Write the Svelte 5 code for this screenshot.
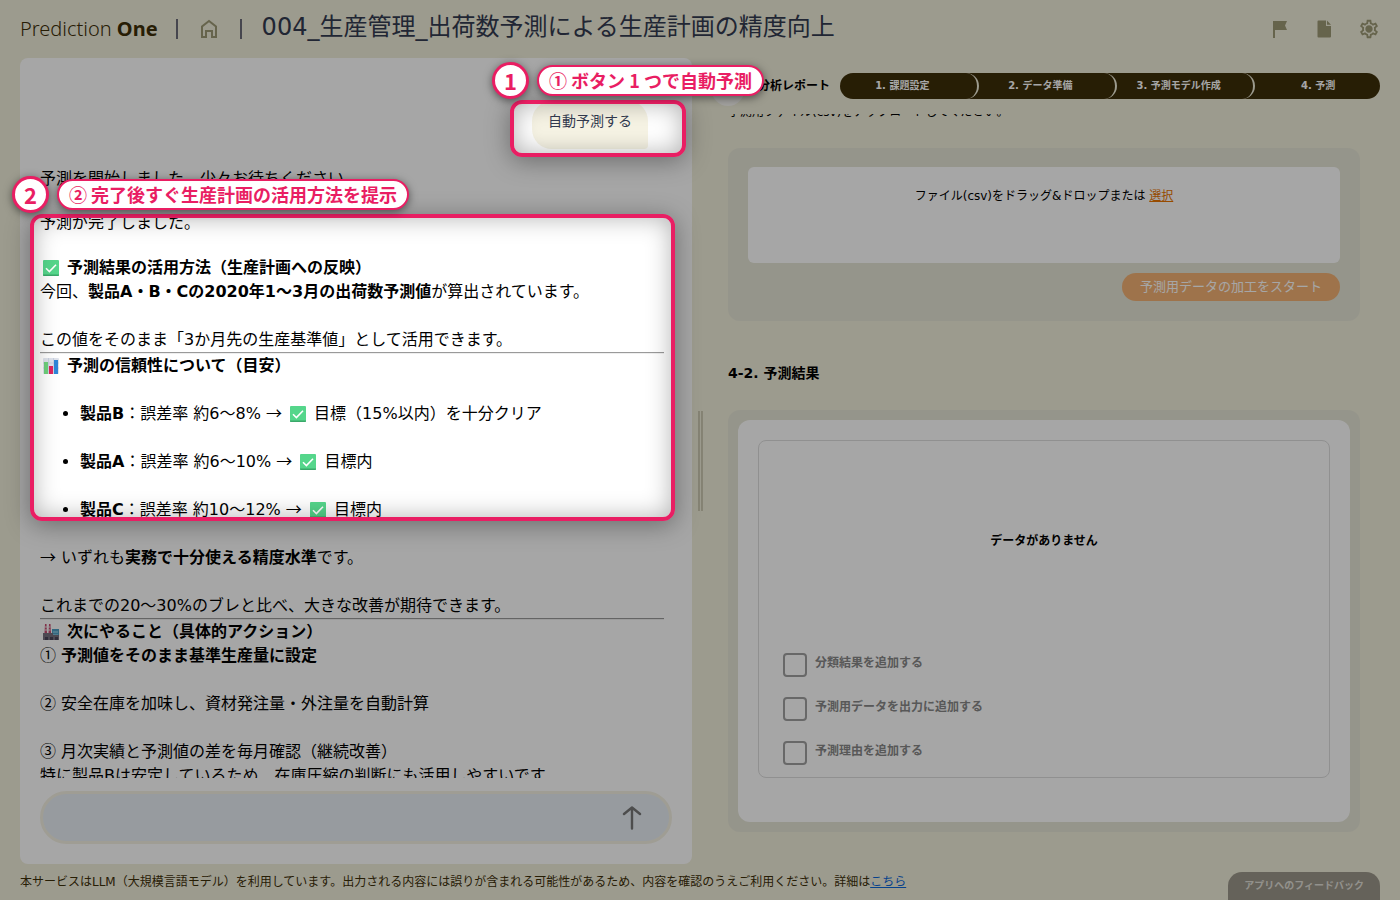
<script>
  const steps = ['1. 課題設定', '2. データ準備', '3. 予測モデル作成', '4. 予測'];
  const products = [
    { name: '製品B', rate: '約6〜8%', result: '目標（15%以内）を十分クリア' },
    { name: '製品A', rate: '約6〜10%', result: '目標内' },
    { name: '製品C', rate: '約10〜12%', result: '目標内' }
  ];
  const options = ['分類結果を追加する', '予測用データを出力に追加する', '予測理由を追加する'];
</script>

{#snippet check()}
  <svg class="emoji" viewBox="0 0 16 16" aria-hidden="true">
    <rect width="16" height="16" rx="1" fill="#55d68b" />
    <path d="M0 14.5h16V15a1 1 0 0 1-1 1H1a1 1 0 0 1-1-1z" fill="#3aa86a" />
    <path d="M3 8.2l3.4 3.3L13 4.7" fill="none" stroke="#fff" stroke-width="1.6" />
  </svg>
{/snippet}

<div class="page">
  <header>
    <div class="logo">Prediction <b>One</b></div>
    <span class="bar"></span>
    <a class="home" href="#home" aria-label="ホーム">
      <svg width="18" height="20" viewBox="0 0 18 20"><path d="M2 18V7.500L9 2l7 5.500V18h-4v-6H6v6z" fill="none" stroke="currentColor" stroke-width="2" /></svg>
    </a>
    <span class="bar"></span>
    <h1>004_生産管理_出荷数予測による生産計画の精度向上</h1>
    <nav>
      <button aria-label="フラグ"><svg width="20" height="20" viewBox="0 0 20 20"><path d="M3 2h14l-2 4.500 2 4.500H5v8H3z" fill="currentColor" /></svg></button>
      <button aria-label="ドキュメント"><svg width="20" height="20" viewBox="0 0 20 20"><path d="M4.500 1.500h7.500V7h5v10.500a1 1 0 0 1-1 1H4.500a1 1 0 0 1-1-1v-15a1 1 0 0 1 1-1zM13 1.500L17 5.800h-4z" fill="currentColor" /></svg></button>
      <button aria-label="設定"><svg width="22" height="22" viewBox="0 0 24 24"><path fill="currentColor" d="M19.430 12.980c.040-.320.070-.640.070-.980s-.030-.660-.070-.980l2.110-1.650c.190-.150.240-.420.120-.640l-2-3.460c-.090-.160-.260-.250-.440-.250-.060 0-.120.010-.170.030l-2.490 1c-.520-.400-1.080-.730-1.690-.980l-.380-2.650C14.460 2.180 14.250 2 14 2h-4c-.250 0-.460.180-.490.420l-.380 2.650c-.610.250-1.170.590-1.690.980l-2.490-1c-.060-.020-.120-.030-.180-.030-.170 0-.340.090-.430.250l-2 3.460c-.130.220-.070.490.120.640l2.110 1.650c-.040.320-.070.650-.070.980s.030.660.070.980l-2.110 1.650c-.190.150-.240.420-.120.640l2 3.460c.090.160.260.250.440.250.060 0 .120-.010.170-.030l2.490-1c.520.400 1.080.730 1.690.980l.380 2.650c.030.240.240.420.490.420h4c.250 0 .460-.180.490-.420l.380-2.650c.610-.250 1.170-.590 1.690-.980l2.490 1c.060.020.120.030.180.030.170 0 .340-.090.430-.250l2-3.460c.120-.220.070-.490-.120-.640l-2.110-1.650zm-1.980-1.710c.040.310.050.520.050.730s-.020.430-.050.730l-.140 1.130.890.700 1.080.840-.700 1.210-1.270-.510-1.040-.420-.900.680c-.430.320-.840.560-1.250.730l-1.060.430-.160 1.130-.200 1.350h-1.400l-.190-1.350-.160-1.130-1.060-.430c-.430-.180-.830-.410-1.230-.710l-.910-.700-1.060.430-1.270.510-.700-1.210 1.080-.840.890-.700-.140-1.130c-.030-.310-.050-.540-.050-.740s.020-.430.050-.730l.140-1.130-.890-.700-1.080-.840.700-1.210 1.270.510 1.040.420.900-.680c.430-.320.840-.560 1.250-.730l1.060-.430.160-1.130.200-1.350h1.390l.190 1.350.160 1.130 1.060.430c.430.180.830.410 1.230.710l.910.700 1.060-.430 1.270-.510.700 1.210-1.070.850-.890.700.140 1.130zM12 8c-2.210 0-4 1.790-4 4s1.790 4 4 4 4-1.790 4-4-1.790-4-4-4z" /></svg></button>
    </nav>
  </header>

  <main>
    <section class="chat">
      <div class="log">
        <div class="bubble">自動予測する</div>
        <p class="status">予測を開始しました。少々お待ちください。</p>
        <p class="status">予測が完了しました。</p>
        <h2>{@render check()}予測結果の活用方法（生産計画への反映）</h2>
        <p>今回、<b>製品A・B・Cの2020年1〜3月の出荷数予測値</b>が算出されています。</p>
        <p class="next">この値をそのまま「3か月先の生産基準値」として活用できます。</p>
        <hr />
        <h2>
          <svg class="emoji" viewBox="0 0 16 16" aria-hidden="true">
            <rect width="16" height="16" rx="1" fill="#dfe3ec" />
            <path d="M0 5h16M0 10h16M5.500 0v16M10.500 0v16" stroke="#bcc5d6" stroke-width=".6" />
            <rect x="1" y="4" width="4" height="12" fill="#6fd07c" /><rect x="6" y="8" width="4" height="8" fill="#e0245e" /><rect x="11" y="2" width="4" height="14" fill="#2f86d8" />
          </svg>予測の信頼性について（目安）
        </h2>
        <ul>
          {#each products as p}
            <li><b>{p.name}</b>：誤差率 {p.rate} <span class="ja">→</span> {@render check()}{p.result}</li>
          {/each}
        </ul>
        <p class="next"><span class="ja">→</span> いずれも<b>実務で十分使える精度水準</b>です。</p>
        <p class="next">これまでの20〜30%のブレと比べ、大きな改善が期待できます。</p>
        <hr />
        <h2>
          <svg class="emoji" viewBox="0 0 16 16" aria-hidden="true">
            <path d="M2 0h1.500l.5 9H1.500zM6 0h1.500l.5 9H5.500z" fill="#c84a70" /><path d="M1.500 3h6M1.500 6h6" stroke="#eee" />
            <rect x="9" y="5" width="7" height="10" fill="#4f9fc4" /><path d="M10 8h5M10 11h5" stroke="#a7dcf0" />
            <path d="M0 9h10v2h6v5H0z" fill="#77717f" /><path d="M2 13h3v3H2zM7 13h3v3H7zM12 13h3v3h-3z" fill="#4b4559" />
          </svg>次にやること（具体的アクション）
        </h2>
        <p><span class="ja">①</span> <b>予測値をそのまま基準生産量に設定</b></p>
        <p class="next"><span class="ja">②</span> 安全在庫を加味し、資材発注量・外注量を自動計算</p>
        <p class="next"><span class="ja">③</span> 月次実績と予測値の差を毎月確認（継続改善）</p>
        <p>特に製品Bは安定しているため、在庫圧縮の判断にも活用しやすいです</p>
      </div>
      <form class="composer">
        <input type="text" aria-label="メッセージ" />
        <button type="button" aria-label="送信"><svg width="20" height="24" viewBox="0 0 20 24"><path d="M10 22.500V2M2 8l8-6.500L18 8" fill="none" stroke="currentColor" stroke-width="2.400" stroke-linecap="round" stroke-linejoin="round" /></svg></button>
      </form>
    </section>

    <div class="splitter"><i></i></div>

    <section class="report">
      <div class="top">
        <button class="back" aria-label="戻る"></button>
        <strong>分析レポート</strong>
        <ol class="steps">
          {#each steps as s}<li>{s}</li>{/each}
        </ol>
      </div>
      <div class="scroll">
        <p class="hint">予測用ファイル(csv)をアップロードしてください。</p>
        <div class="card upload">
          <div class="drop">ファイル(csv)をドラッグ&amp;ドロップまたは <a href="#select">選択</a></div>
          <button class="start">予測用データの加工をスタート</button>
        </div>
        <h3>4-2. 予測結果</h3>
        <div class="card result">
          <div class="sheet">
            <div class="frame">
              <div class="empty">データがありません</div>
              {#each options as o}
                <label><input type="checkbox" /><span>{o}</span></label>
              {/each}
            </div>
          </div>
        </div>
      </div>
    </section>
  </main>

  <footer>
    <p>本サービスはLLM（大規模言語モデル）を利用しています。出力される内容には誤りが含まれる可能性があるため、内容を確認のうえご利用ください。詳細は<a href="#detail">こちら</a></p>
    <button class="feedback">アプリへのフィードバック</button>
  </footer>

  <div class="tour">
    <div class="dim"></div>
    <div class="focus one"></div>
    <div class="focus two"></div>
    <div class="note first"><span class="num">1</span><span class="pill">① ボタン 1 つで自動予測</span></div>
    <div class="note second"><span class="num">2</span><span class="pill">② 完了後すぐ生産計画の活用方法を提示</span></div>
  </div>
</div>

<style>
  :global(body) { margin: 0; }
  * { box-sizing: border-box; }
  p, h1, h2, h3, ul, ol { margin: 0; padding: 0; }
  button { border: 0; padding: 0; background: none; font: inherit; color: inherit; }
  svg { display: block; }
  .page {
    position: relative;
    display: flex;
    flex-direction: column;
    height: 100vh;
    overflow: hidden;
    background: #f0eeda;
    color: #000;
    font: 16px/24px "DejaVu Sans", "Noto Sans CJK JP", sans-serif;
  }
  .ja { font-family: "Noto Sans CJK JP", sans-serif; line-height: 1; }

  header { display: flex; align-items: center; flex: none; height: 58px; padding: 0 20px; color: #3d2e08; }
  .logo { font: 400 20px/28px "Noto Sans", sans-serif; font-weight: 300; }
  .logo b { font-weight: 700; }
  .bar { width: 2px; height: 20px; margin: 0 22px 0 18px; background: #6c6c78; }
  .home { color: #9d9a76; }
  .home + .bar { margin: 0 20px 0 22px; }
  h1 { margin-bottom: 4px; font-size: 24px; line-height: 32px; font-weight: 400; color: #333b50; white-space: nowrap; }
  nav { display: flex; align-items: center; gap: 24px; margin-left: auto; color: #9d9a76; }

  main { display: grid; grid-template-columns: minmax(0, 1fr) 16px minmax(0, 1fr); flex: 1; min-height: 0; padding: 0 20px; }
  .chat { display: flex; flex-direction: column; min-height: 0; padding: 40px 20px 20px; border-radius: 8px; background: #fff; }
  .log { flex: 1; min-height: 0; margin-right: 8px; overflow: hidden; }
  .bubble {
    width: max-content;
    margin: 3px 16px 18px auto;
    padding: 8px 16px 16px;
    border-radius: 20px 20px 4px 20px;
    background: #f7f4e5;
    color: #333b50;
    font-size: 14px;
  }
  .status { margin-bottom: 20px; }
  .status + h2 { margin-top: 21px; }
  h2 { font-size: 16px; line-height: 24px; font-weight: 700; }
  .emoji { display: inline-block; width: 16px; height: 16px; margin: 0 8px 0 3px; vertical-align: -3px; }
  .next { margin-top: 24px; }
  hr { margin: 0; border: 0; border-top: 1px solid #9a9a9a; border-bottom: 1px solid #eee; }
  ul { padding-left: 40px; }
  li { margin-top: 24px; }

  .composer { display: flex; align-items: center; height: 53px; margin: 13px 0 0; padding-right: 27px; border: 3px solid #f5f2e4; border-radius: 27px; background: #e8eff5; }
  .composer input { flex: 1; min-width: 0; height: 40px; margin-left: 20px; border: 0; background: transparent; font: inherit; }
  .composer button { color: #777; }

  .splitter { display: flex; justify-content: center; align-items: center; }
  .splitter i { width: 5px; height: 100px; border: solid #ccc9b3; border-width: 0 2px; }

  .report { display: flex; flex-direction: column; min-height: 0; }
  .top { display: flex; align-items: center; height: 56px; font-size: 12px; }
  .back { flex: none; width: 34px; height: 36px; margin: 4px 13px 0 3px; border-radius: 50%; background: #faf9f4; }
  .top strong { flex: none; margin-right: 10px; white-space: nowrap; }
  .steps { display: flex; flex: 1; list-style: none; color: #fff; font-size: 10px; font-weight: 700; }
  .steps li { position: relative; flex: 150 1 0; height: 26px; margin: 0 0 0 -13px; border-right: 2px solid #f0eeda; border-radius: 0 13px 13px 0; background: #3d2e08; text-align: center; line-height: 26px; white-space: nowrap; }
  .steps li:nth-child(1) { z-index: 3; flex-grow: 125; margin-left: 0; padding-right: 12px; border-radius: 13px; }
  .steps li:nth-child(2) { z-index: 2; }
  .steps li:nth-child(3) { z-index: 1; }
  .steps li:nth-child(4) { flex-grow: 124; padding-left: 14px; border-right: 0; }

  .scroll { flex: 1; min-height: 0; padding: 0 20px; overflow: hidden; font-size: 12px; }
  .hint { margin: -14px 0 24px; }
  .card { border-radius: 12px; background: #e5e5d6; }
  .upload { display: flex; flex-direction: column; gap: 10px; padding: 19px 20px 20px; }
  .drop { height: 96px; padding-top: 17px; border-radius: 6px; background: #fff; text-align: center; }
  .drop a { color: #e87400; }
  .start { align-self: flex-end; height: 28px; padding: 0 18px; border-radius: 14px; background: #f3b173; color: #fff; font-size: 13px; }
  h3 { margin: 40px 0 25px; font-size: 14px; line-height: 24px; }
  .result { padding: 10px; }
  .sheet { padding: 20px 20px 44px; border-radius: 12px; background: #fff; }
  .frame { padding: 0 24px 12px; border: 1px solid #dedede; border-radius: 8px; }
  .empty { height: 212px; padding-top: 88px; text-align: center; font-weight: 700; }
  .frame label { display: flex; gap: 8px; color: #888; font-weight: 700; line-height: 20px; }
  .frame label + label { margin-top: 20px; }
  .frame input { appearance: none; width: 24px; height: 24px; margin: 0; border: 2px solid #a0a0a0; border-radius: 4px; }

  footer { display: flex; justify-content: space-between; align-items: flex-start; flex: none; height: 36px; padding: 0 20px; color: #3d2e08; font-size: 12px; }
  footer p { padding-top: 6px; white-space: nowrap; }
  footer a { color: #0b66d8; }
  .feedback { height: 28px; margin-top: 8px; padding: 0 16px; border-radius: 14px 14px 0 0; background: #9b978a; color: #e0dfd8; font-size: 10px; font-weight: 700; white-space: nowrap; }

  /* Guided tour layer: shade with two windows, frames and captions */
  .tour { position: absolute; inset: 0; z-index: 10; pointer-events: none; }
  .dim {
    position: absolute;
    inset: 0;
    background: rgba(0, 0, 0, .35);
    clip-path: path(evenodd, "M0 0H9999V9999H0Z M520 102H676Q684 102 684 110V147Q684 155 676 155H520Q512 155 512 147V110Q512 102 520 102Z M42 216H663Q673 216 673 226V509Q673 519 663 519H42Q32 519 32 509V226Q32 216 42 216Z");
  }
  .focus { position: absolute; border: 4px solid #e91e63; border-radius: 12px; box-shadow: 0 4px 24px rgba(0, 0, 0, .35), inset 0 0 24px rgba(0, 0, 0, .3); }
  .one { left: 510px; top: 100px; width: 176px; height: 57px; }
  .two { left: 30px; top: 214px; width: 645px; height: 307px; }
  .note { position: absolute; display: flex; align-items: center; gap: 8px; color: #e91e63; font: 700 18px/24px "Noto Sans CJK JP", sans-serif; white-space: nowrap; }
  .first { left: 492px; top: 62px; }
  .second { left: 12px; top: 176px; }
  .num, .pill { border: 3px solid #e91e63; background: #fff; box-shadow: 0 2px 8px rgba(0, 0, 0, .5); }
  .num { width: 37px; height: 37px; border-radius: 50%; text-align: center; font-size: 22px; line-height: 31px; }
  .pill { height: 31px; padding: 0 10px; border-width: 2px; border-radius: 16px; line-height: 26px; }
</style>
